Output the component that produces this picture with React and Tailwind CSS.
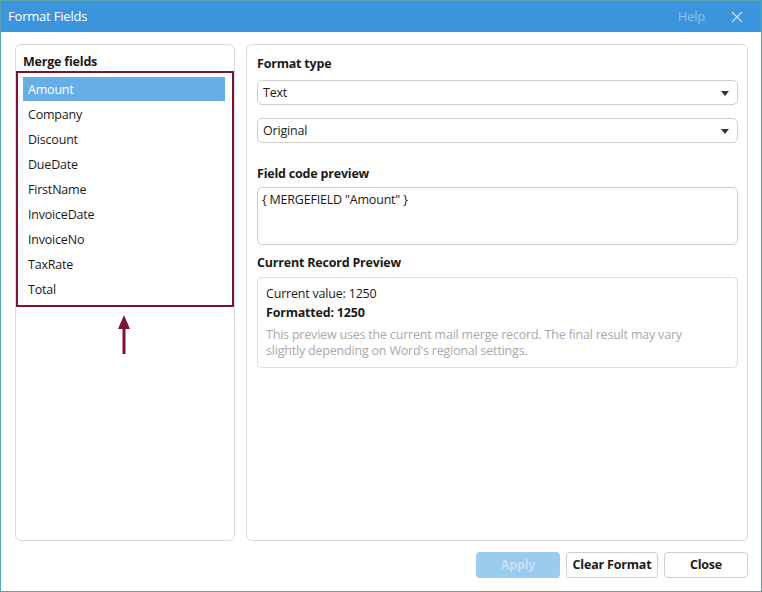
import { useState } from "react"

const fields = ["Amount", "Company", "Discount", "DueDate", "FirstName", "InvoiceDate", "InvoiceNo", "TaxRate", "Total"]

function Caret() {
  return (
    <svg width="8" height="5" viewBox="0 0 8 5" className="shrink-0">
      <path d="M0 0h8L4 5z" fill="#333" />
    </svg>
  )
}

function Select({ value }) {
  return (
    <div className="h-[25px] rounded-[5px] border border-[#cfcfcf] flex items-center justify-between pl-[5px] pr-[8px] pt-[1px] bg-white">
      <span>{value}</span>
      <Caret />
    </div>
  )
}

export default function App() {
  const [selected, setSelected] = useState("Amount")

  return (
    <div
      className="w-[762px] h-[592px] border border-[#5aa3b3] bg-white flex flex-col text-[12.5px] tracking-[-0.2px] text-[#1a1a1a]"
      style={{ fontFamily: "'Open Sans', 'Noto Sans', sans-serif" }}
    >
      {/* Title bar */}
      <div className="h-[31px] shrink-0 bg-[#3b95dd] flex items-center pl-[7px] pr-[18px] pt-[1px]">
        <span className="text-white text-[13px]">Format Fields</span>
        <span className="ml-auto text-[#8cc2ee] text-[13px]">Help</span>
        <svg width="12" height="12" viewBox="0 0 12 12" className="ml-[26px]">
          <path d="M1 1l10 10M11 1L1 11" stroke="#cfe5f8" strokeWidth="1.1" />
        </svg>
      </div>

      {/* Body */}
      <div className="flex gap-[11px] pl-[14px] pr-[13px] pt-[12px]">
        {/* Merge fields */}
        <div className="relative w-[220px] h-[497px] rounded-[6px] border border-[#d9d9d9] pl-[7px] pr-[9px] pt-[8px]">
          <div className="font-bold leading-[18px]">Merge fields</div>
          <ul className="mt-[6px]">
            {fields.map((f) => (
              <li
                key={f}
                onClick={() => setSelected(f)}
                className={
                  "h-[24px] mb-[1px] leading-[26px] pl-[5px] cursor-default " +
                  (selected === f ? "bg-[#68aee6] text-white" : "")
                }
              >
                {f}
              </li>
            ))}
          </ul>
          <div className="absolute left-0 top-[26px] w-[218px] h-[236px] border-2 border-[#7b1535] pointer-events-none" />
          <svg width="16" height="40" viewBox="0 0 16 40" className="absolute left-[100px] top-[270px]">
            <path d="M8 0L14 14H2z" fill="#7b1535" />
            <path d="M8 10V39" stroke="#7b1535" strokeWidth="3" />
          </svg>
        </div>

        {/* Format options */}
        <div className="w-[502px] h-[497px] rounded-[6px] border border-[#d9d9d9] pl-[10px] pr-[9px] pt-[10px]">
          <div className="font-bold leading-[18px]">Format type</div>
          <div className="mt-[7px] flex flex-col gap-[13px]">
            <Select value="Text" />
            <Select value="Original" />
          </div>
          <div className="font-bold leading-[18px] mt-[22px]">Field code preview</div>
          <div className="mt-[4px] h-[58px] rounded-[5px] border border-[#cfcfcf] px-[4px] pt-[2px] leading-[20px]">
            {'{ MERGEFIELD "Amount" }'}
          </div>
          <div className="font-bold leading-[18px] mt-[9px]">Current Record Preview</div>
          <div className="mt-[5px] h-[91px] rounded-[5px] border border-[#dcdcdc] px-[8px] pt-[6px]">
            <div className="leading-[19px]">Current value: 1250</div>
            <div className="font-bold leading-[19px]">Formatted: 1250</div>
            <div className="text-[#a9a9a9] leading-[16px] mt-[5px] pr-[30px]">
              This preview uses the current mail merge record. The final result may vary slightly depending on Word's regional settings.
            </div>
          </div>
        </div>
      </div>

      {/* Footer buttons */}
      <div className="flex justify-end gap-[6px] pr-[13px] mt-[11px]">
        <button className="w-[84px] h-[26px] rounded-[4px] bg-[#9ccbf0] text-[#c6e1f6] font-bold">Apply</button>
        <button className="w-[92px] h-[26px] rounded-[4px] border border-[#cfcfcf] bg-white font-bold">Clear Format</button>
        <button className="w-[84px] h-[26px] rounded-[4px] border border-[#cfcfcf] bg-white font-bold">Close</button>
      </div>
    </div>
  )
}
